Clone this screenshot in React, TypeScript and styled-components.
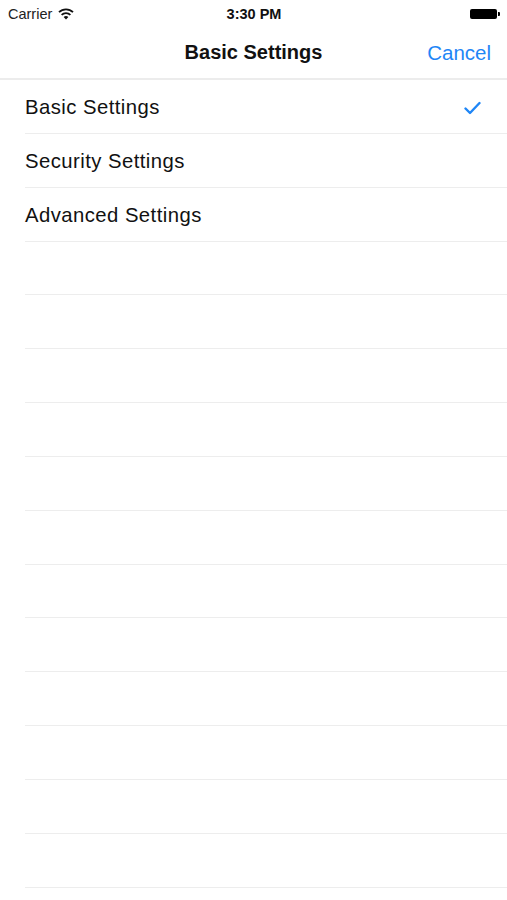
import React from 'react';
import styled, { createGlobalStyle } from 'styled-components';

const GlobalStyle = createGlobalStyle`
  html, body {
    margin: 0;
    padding: 0;
    background: #ffffff;
  }
  body {
    font-family: "Liberation Sans", Arial, sans-serif;
    color: #000;
  }
`;

const Screen = styled.div`
  width: 507px;
  height: 900px;
  overflow: hidden;
  background: #fff;
  display: flex;
  flex-direction: column;
`;

const StatusBar = styled.div`
  height: 27px;
  display: grid;
  grid-template-columns: 1fr auto 1fr;
  align-items: center;
  padding: 0 7px 0 8px;
  font-size: 14.5px;
`;

const Carrier = styled.div`
  display: flex;
  align-items: center;
  gap: 6px;
  color: #222;
`;

const Clock = styled.div`
  font-weight: bold;
  color: #111;
`;

const Battery = styled.div`
  justify-self: end;
  display: flex;
  align-items: center;
`;

const BatteryBody = styled.div`
  width: 27px;
  height: 10px;
  background: #000;
  border-radius: 2px;
`;

const BatteryTip = styled.div`
  width: 2px;
  height: 4px;
  background: #000;
  margin-left: 1px;
  border-radius: 0 1px 1px 0;
`;

const NavBar = styled.div`
  height: 51px;
  display: grid;
  grid-template-columns: 1fr auto 1fr;
  align-items: center;
  padding: 0 16px 0 16px;
  border-bottom: 2px solid #ececec;
`;

const Title = styled.div`
  grid-column: 2;
  font-size: 20px;
  font-weight: bold;
  color: #111;
`;

const NavButton = styled.button`
  grid-column: 3;
  justify-self: end;
  border: none;
  background: none;
  padding: 0;
  font-family: inherit;
  font-size: 20.5px;
  color: #1f86f6;
`;

const List = styled.div`
  display: flex;
  flex-direction: column;
`;

const Row = styled.div`
  height: 53.85px;
  box-sizing: border-box;
  margin-left: 25px;
  padding: 3px 26px 0 0;
  display: flex;
  align-items: center;
  justify-content: space-between;
  border-bottom: 1.5px solid #ededed;
  font-size: 20.3px;
  letter-spacing: 0.45px;
  color: #111;
`;

const Check = () => (
  <svg width="17" height="14" viewBox="0 0 17 14">
    <path
      d="M1.5 7.5 L6 12 L15.5 2"
      fill="none"
      stroke="#1f86f6"
      strokeWidth="2.4"
      strokeLinecap="round"
      strokeLinejoin="round"
    />
  </svg>
);

const Wifi = () => (
  <svg width="16" height="12" viewBox="0 0 16 12">
    <path d="M1 4.2 A10 10 0 0 1 15 4.2" fill="none" stroke="#111" strokeWidth="1.8" />
    <path d="M3.6 6.8 A6.4 6.4 0 0 1 12.4 6.8" fill="none" stroke="#111" strokeWidth="1.8" />
    <path d="M8 11.5 L5.6 9.1 A3.4 3.4 0 0 1 10.4 9.1 Z" fill="#111" />
  </svg>
);

const items = [
  { label: 'Basic Settings', checked: true },
  { label: 'Security Settings' },
  { label: 'Advanced Settings' },
  { label: '' },
  { label: '' },
  { label: '' },
  { label: '' },
  { label: '' },
  { label: '' },
  { label: '' },
  { label: '' },
  { label: '' },
  { label: '' },
  { label: '' },
  { label: '' },
];

export default function App() {
  return (
    <Screen>
      <GlobalStyle />
      <StatusBar>
        <Carrier>
          Carrier
          <Wifi />
        </Carrier>
        <Clock>3:30 PM</Clock>
        <Battery>
          <BatteryBody />
          <BatteryTip />
        </Battery>
      </StatusBar>
      <NavBar>
        <Title>Basic Settings</Title>
        <NavButton>Cancel</NavButton>
      </NavBar>
      <List>
        {items.map((item, i) => (
          <Row key={i}>
            <span>{item.label}</span>
            {item.checked && <Check />}
          </Row>
        ))}
      </List>
    </Screen>
  );
}
